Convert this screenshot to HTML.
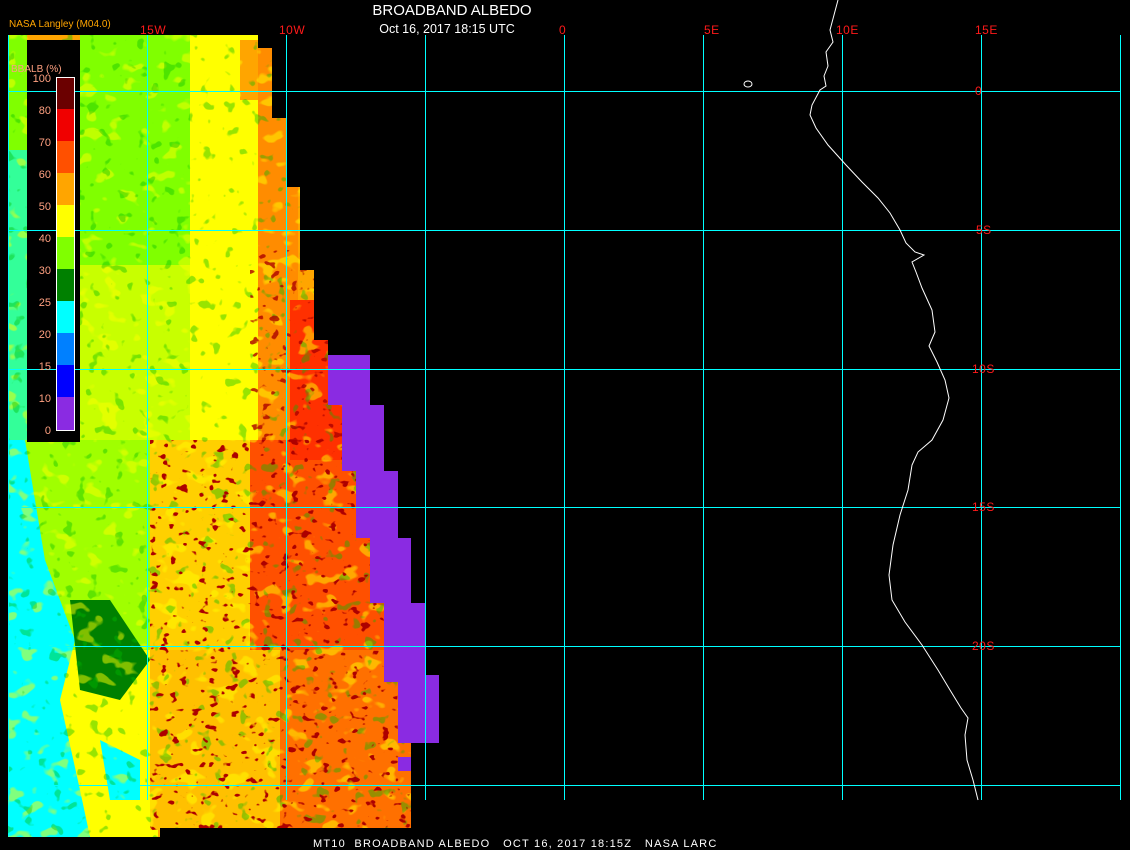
<!DOCTYPE html>
<html><head><meta charset="utf-8"><style>
html,body{margin:0;padding:0;background:#000;width:1130px;height:850px;overflow:hidden}
svg{display:block}
text{font-family:"Liberation Sans",sans-serif}
</style></head><body>
<svg width="1130" height="850" viewBox="0 0 1130 850" xmlns="http://www.w3.org/2000/svg">
<defs>
<clipPath id="img">
<polygon points="8,35 258,35 258,48 272,48 272,118 287,118 287,187 300,187 300,270 314,270 314,340 328,340 328,405 342,405 342,471 356,471 356,538 370,538 370,603 384,603 384,682 398,682 398,735 411,735 411,828 160,828 160,837 8,837"/>
</clipPath>
<filter id="spk" x="0" y="0" width="100%" height="100%">
<feTurbulence type="fractalNoise" baseFrequency="0.1 0.13" numOctaves="2" seed="4"/>
<feColorMatrix type="matrix" values="0 0 0 0 0.42  0 0 0 0 0  0 0 0 0 0  0 0 0 -16 5.6"/>
</filter>
<filter id="spk2" x="0" y="0" width="100%" height="100%">
<feTurbulence type="fractalNoise" baseFrequency="0.05 0.07" numOctaves="2" seed="9"/>
<feColorMatrix type="matrix" values="0 0 0 0 1  0 0 0 0 1  0 0 0 0 0  0 0 0 -14 5.5"/>
</filter>
<filter id="spk3" x="0" y="0" width="100%" height="100%">
<feTurbulence type="fractalNoise" baseFrequency="0.08" numOctaves="2" seed="2"/>
<feColorMatrix type="matrix" values="0 0 0 0 0  0 0 0 0 0.5  0 0 0 0 0  0 0 0 -16 5.6"/>
</filter>
</defs>
<rect width="1130" height="850" fill="#000"/>
<g clip-path="url(#img)">
<rect x="0" y="0" width="450" height="850" fill="#ffa500"/>
<rect x="80" y="35" width="110" height="230" fill="#80ff00"/>
<rect x="190" y="35" width="68" height="90" fill="#ffff00"/>
<rect x="80" y="265" width="120" height="190" fill="#c8ff00"/>
<rect x="190" y="125" width="80" height="330" fill="#ffff00"/>
<rect x="240" y="40" width="20" height="60" fill="#ffa500"/>
<rect x="258" y="48" width="40" height="400" fill="#ff8c00"/>
<rect x="8" y="35" width="19" height="800" fill="#80ff00"/>
<rect x="8" y="150" width="19" height="300" fill="#00ffff" opacity="0.6"/>
<rect x="8" y="440" width="150" height="210" fill="#a0ff00"/>
<rect x="150" y="440" width="100" height="210" fill="#ffd000"/>
<rect x="250" y="440" width="170" height="220" fill="#ff5000"/>
<rect x="290" y="300" width="60" height="160" fill="#ff3000"/>
<rect x="8" y="650" width="150" height="190" fill="#ffff00"/>
<rect x="150" y="650" width="130" height="180" fill="#ffc000"/>
<rect x="280" y="650" width="140" height="180" fill="#ff7000"/>
<polygon points="8,440 25,440 45,560 75,640 60,700 80,790 90,837 8,837" fill="#00ffff"/>
<polygon points="70,600 110,600 150,660 120,700 80,690" fill="#008000"/>
<polygon points="100,740 140,760 140,800 110,800" fill="#00ffff"/>
<rect x="0" y="0" width="450" height="850" filter="url(#spk2)" opacity="0.5"/>
<rect x="0" y="0" width="450" height="850" filter="url(#spk3)" opacity="0.4"/>
<rect x="150" y="440" width="300" height="400" filter="url(#spk)"/>
<rect x="250" y="250" width="120" height="190" filter="url(#spk)" opacity="0.8"/>
</g>
<rect x="27" y="40" width="53" height="402" fill="#000"/>
<polygon points="328,355 370,355 370,405 384,405 384,471 398,471 398,538 411,538 411,603 425,603 425,675 439,675 439,743 398,743 398,682 384,682 384,603 370,603 370,538 356,538 356,471 342,471 342,405 328,405" fill="#8a2be2"/>
<rect x="398" y="757" width="13" height="14" fill="#8a2be2"/>
<g stroke="#00ffff" stroke-width="1">
<line x1="8" y1="91.5" x2="1121" y2="91.5"/>
<line x1="8" y1="230.5" x2="1121" y2="230.5"/>
<line x1="8" y1="369.5" x2="1121" y2="369.5"/>
<line x1="8" y1="507.5" x2="1121" y2="507.5"/>
<line x1="8" y1="646.5" x2="1121" y2="646.5"/>
<line x1="8" y1="785.5" x2="1121" y2="785.5"/>
<line x1="8.5" y1="35" x2="8.5" y2="800"/>
<line x1="147.5" y1="35" x2="147.5" y2="800"/>
<line x1="286.5" y1="35" x2="286.5" y2="800"/>
<line x1="425.5" y1="35" x2="425.5" y2="800"/>
<line x1="564.5" y1="35" x2="564.5" y2="800"/>
<line x1="703.5" y1="35" x2="703.5" y2="800"/>
<line x1="842.5" y1="35" x2="842.5" y2="800"/>
<line x1="981.5" y1="35" x2="981.5" y2="800"/>
<line x1="1120.5" y1="35" x2="1120.5" y2="800"/>
</g>
<g>
<rect x="57" y="77" width="17" height="32" fill="#6b0000"/>
<rect x="57" y="109" width="17" height="32" fill="#f00000"/>
<rect x="57" y="141" width="17" height="32" fill="#ff5000"/>
<rect x="57" y="173" width="17" height="32" fill="#ffa500"/>
<rect x="57" y="205" width="17" height="32" fill="#ffff00"/>
<rect x="57" y="237" width="17" height="32" fill="#80ff00"/>
<rect x="57" y="269" width="17" height="32" fill="#008000"/>
<rect x="57" y="301" width="17" height="32" fill="#00ffff"/>
<rect x="57" y="333" width="17" height="32" fill="#0080ff"/>
<rect x="57" y="365" width="17" height="32" fill="#0000ff"/>
<rect x="57" y="397" width="17" height="33" fill="#8a2be2"/>
<rect x="56.5" y="77.5" width="18" height="353" fill="none" stroke="#fff" stroke-width="1"/>
</g>
<g fill="#ffa080" font-size="11" text-anchor="end">
<text x="51" y="82">100</text><text x="51" y="114">80</text><text x="51" y="146">70</text>
<text x="51" y="178">60</text><text x="51" y="210">50</text><text x="51" y="242">40</text>
<text x="51" y="274">30</text><text x="51" y="306">25</text><text x="51" y="338">20</text>
<text x="51" y="370">15</text><text x="51" y="402">10</text><text x="51" y="434">0</text>
</g>
<text x="11" y="72" fill="#ffa080" font-size="10">BBALB (%)</text>
<text x="9" y="27" fill="#ffa500" font-size="10">NASA Langley (M04.0)</text>
<text x="452" y="15" fill="#fff" font-size="15" text-anchor="middle">BROADBAND ALBEDO</text>
<text x="447" y="33" fill="#fff" font-size="12.5" text-anchor="middle">Oct 16, 2017 18:15 UTC</text>
<g fill="#ff1a1a" font-size="12" font-family="Liberation Mono,monospace" letter-spacing="0.5">
<text x="140" y="34">15W</text><text x="279" y="34">10W</text><text x="559" y="34">0</text>
<text x="704" y="34">5E</text><text x="836" y="34">10E</text><text x="975" y="34">15E</text>
<text x="975" y="95">0</text><text x="976" y="234">5S</text><text x="972" y="373">10S</text>
<text x="972" y="511">15S</text><text x="972" y="650">20S</text>
</g>
<polyline fill="none" stroke="#fff" stroke-width="1" points="838,0 834,15 830,30 833,42 826,52 828,66 824,76 826,86 820,90 812,105 810,115 816,128 828,145 846,165 862,182 878,198 890,213 900,230 906,243 915,252 924,255 912,262 916,272 922,288 932,310 935,332 929,346 937,362 945,380 949,398 943,420 932,440 918,452 912,465 908,490 900,515 893,545 889,575 892,600 905,622 922,645 938,670 950,690 961,708 968,718 965,735 967,760 973,780 978,800"/>
<ellipse cx="748" cy="84" rx="4" ry="3" fill="none" stroke="#fff"/>
<text x="313" y="847" fill="#fff" font-size="11" font-family="Liberation Mono,monospace" letter-spacing="1.2" xml:space="preserve">MT10  BROADBAND ALBEDO   OCT 16, 2017 18:15Z   NASA LARC</text>
</svg>
</body></html>
